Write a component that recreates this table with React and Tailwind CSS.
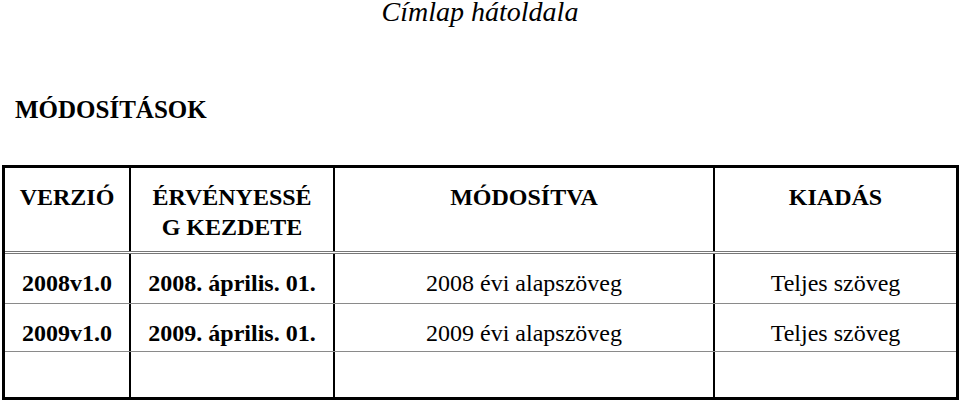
import React from "react";

const serif = { fontFamily: '"Liberation Serif", "Times New Roman", serif' };

function Cell({ children, last, bold, className = "" }) {
  return (
    <div
      className={`flex flex-col items-center text-center text-[24px] leading-[30px] text-black ${
        bold ? "font-bold" : "font-normal"
      } ${last ? "" : "border-r-2 border-black"} ${className}`}
    >
      {children}
    </div>
  );
}

export default function App() {
  const rows = [
    ["2008v1.0", "2008. április. 01.", "2008 évi alapszöveg", "Teljes szöveg"],
    ["2009v1.0", "2009. április. 01.", "2009 évi alapszöveg", "Teljes szöveg"],
  ];
  return (
    <div className="w-[960px] h-[407px] bg-white overflow-hidden" style={serif}>
      <div className="h-[24px] text-center italic text-[28px] leading-[24px] text-black">
        Címlap hátoldala
      </div>
      <div className="mt-[73px] pl-[15px] font-bold text-[25px] leading-[25px] text-black">
        MÓDOSÍTÁSOK
      </div>
      <div className="mt-[43px] ml-[2px] w-[957px] border-[3px] border-black">
        <div className="grid grid-cols-[126px_204px_380px_241px] h-[86px] border-b-[3px] border-double border-[#777]">
          <Cell bold className="pt-[14px]">VERZIÓ</Cell>
          <Cell bold className="pt-[14px]">
            <span>ÉRVÉNYESSÉ</span>
            <span>G KEZDETE</span>
          </Cell>
          <Cell bold className="pt-[14px]">MÓDOSÍTVA</Cell>
          <Cell bold last className="pt-[14px]">KIADÁS</Cell>
        </div>
        {rows.map((r, i) => (
          <div
            key={i}
            className={`grid grid-cols-[126px_204px_380px_241px] border-b border-[#8a8a8a] ${
              i === 0 ? "h-[50px]" : "h-[48px]"
            }`}
          >
            <Cell bold className={i === 0 ? "pt-[14px]" : "pt-[14px]"}>{r[0]}</Cell>
            <Cell bold className={i === 0 ? "pt-[14px]" : "pt-[14px]"}>{r[1]}</Cell>
            <Cell className={i === 0 ? "pt-[14px]" : "pt-[14px]"}>{r[2]}</Cell>
            <Cell last className={i === 0 ? "pt-[14px]" : "pt-[14px]"}>{r[3]}</Cell>
          </div>
        ))}
        <div className="grid grid-cols-[126px_204px_380px_241px] h-[45px]">
          <Cell />
          <Cell />
          <Cell />
          <Cell last />
        </div>
      </div>
    </div>
  );
}
